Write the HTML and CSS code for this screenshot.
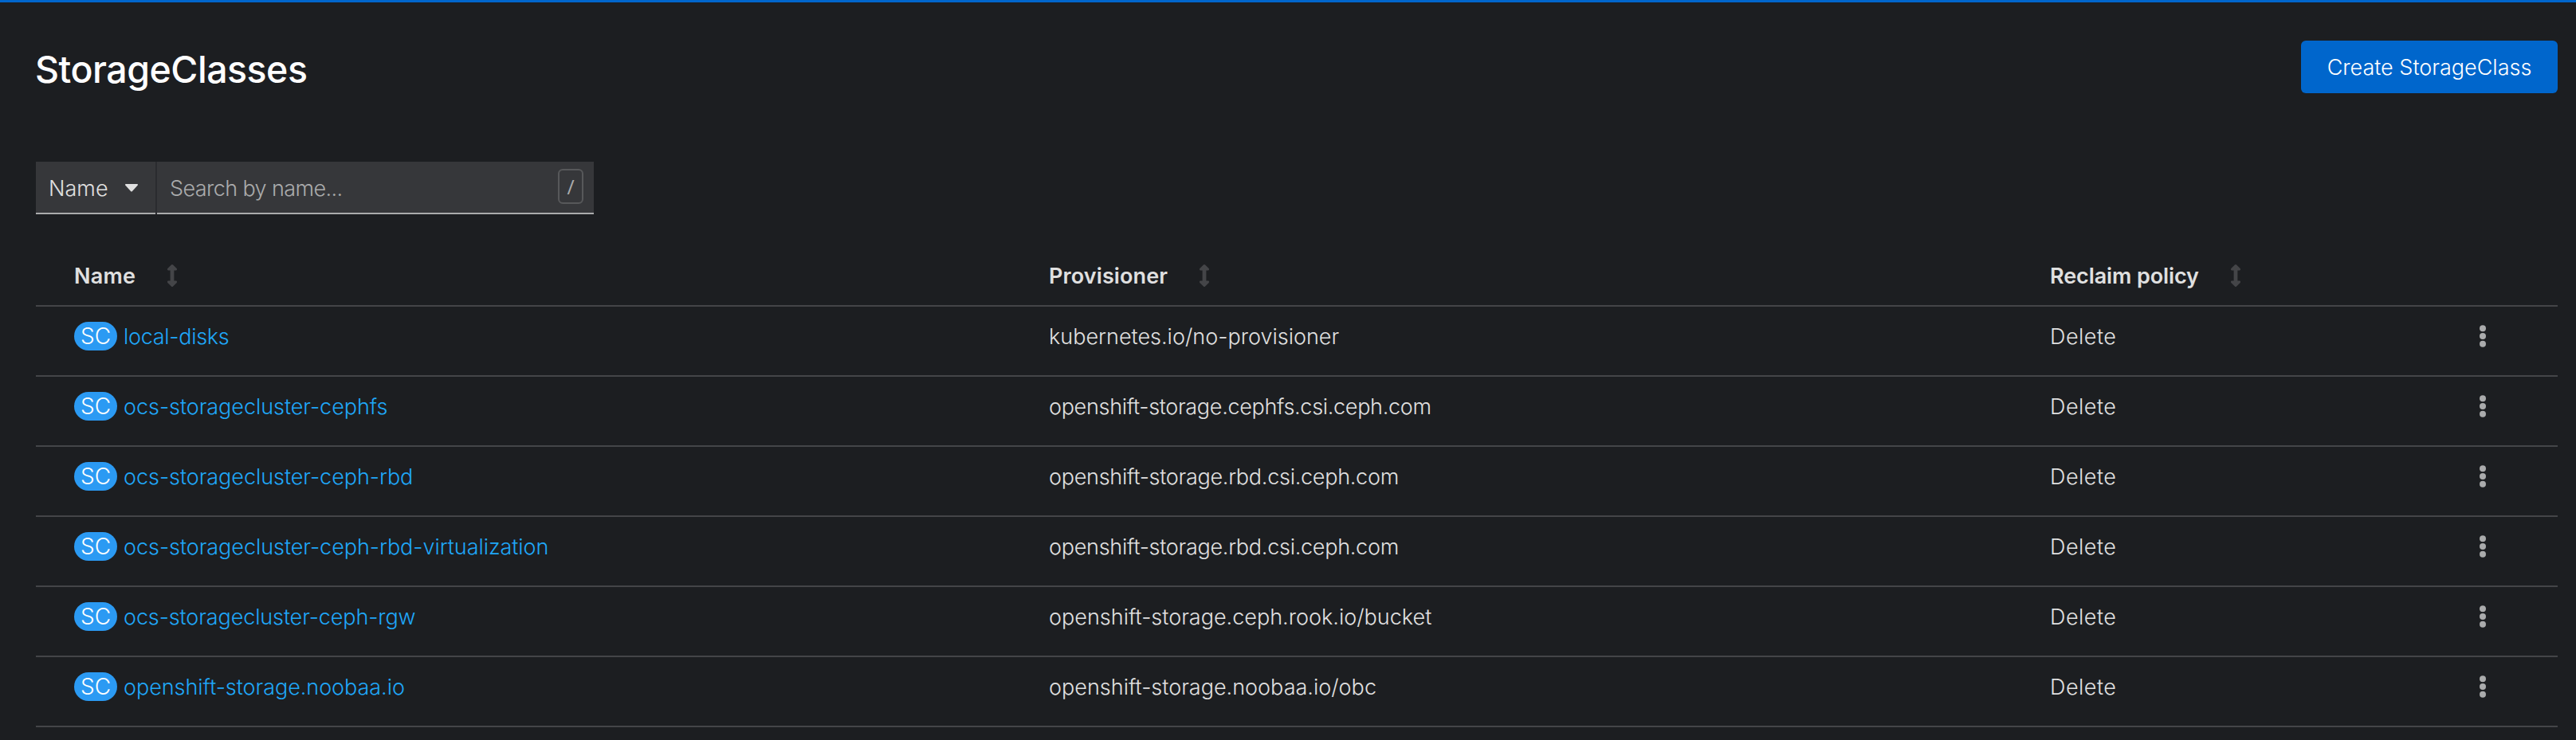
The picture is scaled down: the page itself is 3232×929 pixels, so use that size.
FILE: index.html
```html
<!DOCTYPE html>
<html lang="en">
<head>
<meta charset="utf-8">
<title>StorageClasses</title>
<link rel="stylesheet" href="styles.css">
</head>
<body>
<svg class="defs" aria-hidden="true">
  <symbol id="sort" viewBox="0 0 12 28"><path d="M4.9.5Q6-.5 7.1.5L11.7 5.1Q12.6 7.1 11 7.4H8.4V20.6H11Q12.6 20.9 11.7 22.9L7.1 27.5Q6 28.5 4.9 27.5L.3 22.9Q-.6 20.9 1 20.6H3.6V7.4H1Q-.6 7.1 .3 5.1Z"/></symbol>
  <symbol id="kebab" viewBox="0 0 8 28"><circle cx="4" cy="4.2" r="4"/><circle cx="4" cy="14" r="4"/><circle cx="4" cy="23.8" r="4"/></symbol>
</svg>
<main class="page">
  <header class="page-header">
    <h1 class="title">StorageClasses</h1>
    <button class="create" type="button">Create StorageClass</button>
  </header>
  <div class="toolbar">
    <button class="filter" type="button"><span>Name</span><svg class="caret" viewBox="0 0 16 10"><path d="M1 0H15Q16.6.4 15.6 1.8L9 9Q8 10 7 9L.4 1.8Q-.6.4 1 0Z"/></svg></button>
    <div class="search"><span class="placeholder">Search by name...</span><kbd class="key">/</kbd></div>
  </div>
  <div class="table" role="table">
    <div class="row head" role="row">
      <div class="cell"><span class="h-name">Name</span><svg class="sort"><use href="#sort"/></svg></div>
      <div class="cell"><span class="h-prov">Provisioner</span><svg class="sort"><use href="#sort"/></svg></div>
      <div class="cell"><span class="h-policy">Reclaim policy</span><svg class="sort"><use href="#sort"/></svg></div>
      <div class="cell"></div>
    </div>
    <div class="row" role="row">
      <div class="cell"><span class="badge">SC</span><a class="link snug">local-disks</a></div>
      <div class="cell"><span>kubernetes.io/no-provisioner</span></div>
      <div class="cell"><span class="policy">Delete</span></div>
      <div class="cell action"><svg class="kebab"><use href="#kebab"/></svg></div>
    </div>
    <div class="row" role="row">
      <div class="cell"><span class="badge">SC</span><a class="link">ocs-storagecluster-cephfs</a></div>
      <div class="cell"><span class="snug-3">openshift-storage.cephfs.csi.ceph.com</span></div>
      <div class="cell"><span class="policy">Delete</span></div>
      <div class="cell action"><svg class="kebab"><use href="#kebab"/></svg></div>
    </div>
    <div class="row" role="row">
      <div class="cell"><span class="badge">SC</span><a class="link">ocs-storagecluster-ceph-rbd</a></div>
      <div class="cell"><span class="snug-2">openshift-storage.rbd.csi.ceph.com</span></div>
      <div class="cell"><span class="policy">Delete</span></div>
      <div class="cell action"><svg class="kebab"><use href="#kebab"/></svg></div>
    </div>
    <div class="row" role="row">
      <div class="cell"><span class="badge">SC</span><a class="link">ocs-storagecluster-ceph-rbd-virtualization</a></div>
      <div class="cell"><span class="snug-2">openshift-storage.rbd.csi.ceph.com</span></div>
      <div class="cell"><span class="policy">Delete</span></div>
      <div class="cell action"><svg class="kebab"><use href="#kebab"/></svg></div>
    </div>
    <div class="row" role="row">
      <div class="cell"><span class="badge">SC</span><a class="link snug-1">ocs-storagecluster-ceph-rgw</a></div>
      <div class="cell"><span>openshift-storage.ceph.rook.io/bucket</span></div>
      <div class="cell"><span class="policy">Delete</span></div>
      <div class="cell action"><svg class="kebab"><use href="#kebab"/></svg></div>
    </div>
    <div class="row" role="row">
      <div class="cell"><span class="badge">SC</span><a class="link">openshift-storage.noobaa.io</a></div>
      <div class="cell"><span>openshift-storage.noobaa.io/obc</span></div>
      <div class="cell"><span class="policy">Delete</span></div>
      <div class="cell action"><svg class="kebab"><use href="#kebab"/></svg></div>
    </div>
  </div>
</main>
</body>
</html>
```
FILE: styles.css
```css
* { box-sizing: border-box; }
body {
  margin: 0;
  background: #1c1e21;
  color: #e0e0e0;
  font: 300 27px/40px Inter, "Liberation Sans", sans-serif;
}
button { font: inherit; border: 0; margin: 0; }
.defs { display: none; }
.page {
  height: 929px;
  overflow: hidden;
  border-top: 3px solid #0066cc;
  padding: 48px 23px 0 45px;
}
.page-header {
  display: flex;
  align-items: flex-start;
  justify-content: space-between;
  height: 152px;
}
.title {
  margin: 5px 0 0 -1px;
  color: #fff;
  font-size: 46.5px;
  line-height: 62px;
  font-weight: 450;
  letter-spacing: -0.5px;
}
.create {
  width: 322px;
  height: 66px;
  padding: 1px 0 0;
  border-radius: 6px;
  background: #0066cc;
  color: #fff;
  white-space: nowrap;
}
.toolbar { display: flex; gap: 2px; height: 66px; width: 700px; background: #2a2b2f; }
.filter, .search {
  display: flex;
  align-items: center;
  background: #36373a;
  border-bottom: 2px solid #aaabac;
}
.filter {
  width: 150px;
  justify-content: space-between;
  padding: 3px 22px 0 16px;
  color: #e0e0e0;
}
.caret { width: 16px; height: 10px; margin-bottom: 1px; fill: #e0e0e0; }
.search {
  width: 548px;
  justify-content: space-between;
  padding: 0 13px 0 16px;
  color: #aaabac;
}
.placeholder { letter-spacing: -0.6px; padding-top: 3px; }
.key {
  width: 32px;
  height: 44px;
  margin-bottom: 2px;
  border: 2px solid #57585a;
  border-radius: 6px;
  font: 400 25px/40px "Open Sans", sans-serif;
  text-align: center;
}
.table { padding-top: 30px; }
.row {
  display: grid;
  grid-template-columns: 1271px 1256px 540px 1fr;
  height: 88px;
  border-bottom: 2px solid #444548;
}
.head { height: 86px; font-weight: 600; padding-top: 10px; }
.cell { display: flex; align-items: center; padding-bottom: 12px; white-space: nowrap; }
.cell > span:not(.badge), .link { padding-top: 2px; }
.cell:first-child { padding-left: 48px; }
.head .cell { gap: 40px; padding-bottom: 0; }
.h-name { letter-spacing: 0.2px; }
.h-prov { letter-spacing: 0.1px; }
.h-policy { letter-spacing: -0.1px; }
.sort { width: 12px; height: 28px; fill: #444548; }
.badge {
  width: 54px;
  height: 36px;
  margin-right: 8px;
  border-radius: 20px;
  background: #2b9af3;
  color: #fff;
  font-size: 28px;
  line-height: 36px;
  text-align: center;
}
.link { color: #1fa7f8; letter-spacing: -0.05px; }
.snug { letter-spacing: -0.3px; }
.snug-1 { letter-spacing: -0.12px; }
.snug-2 { letter-spacing: -0.28px; }
.snug-3 { letter-spacing: -0.32px; }
.policy { letter-spacing: 0.5px; }
.kebab { width: 8px; height: 28px; margin-left: -1px; fill: #aaabac; }
```
